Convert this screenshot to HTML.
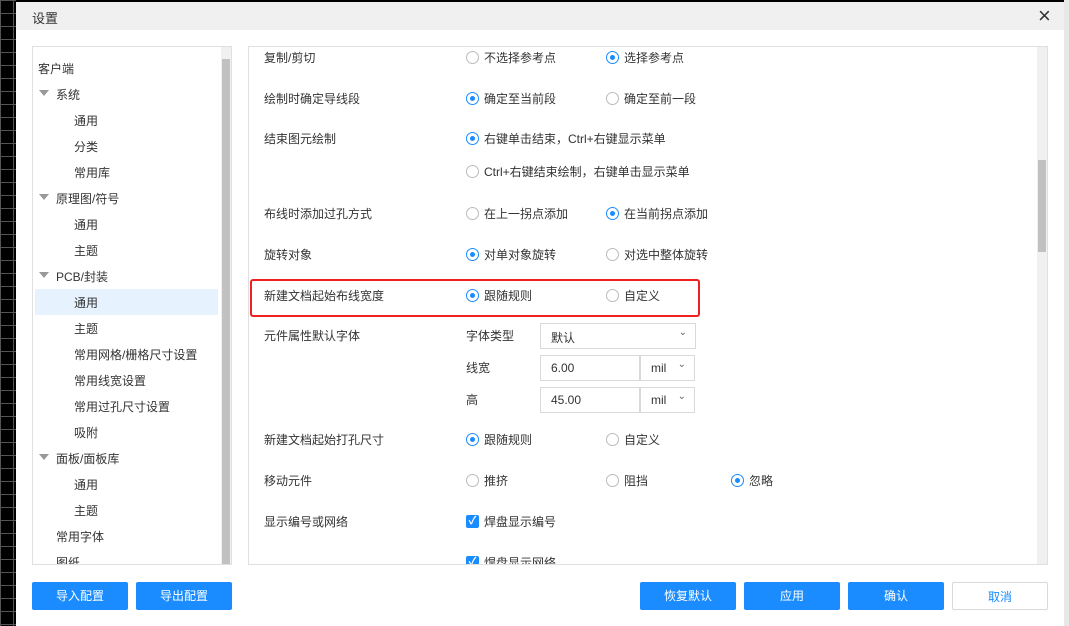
<!DOCTYPE html>
<html><head><meta charset="utf-8"><style>
*{box-sizing:border-box;margin:0;padding:0}
body{width:1069px;height:626px;overflow:hidden;background:#000;position:relative;font-family:"Liberation Sans","Noto Sans CJK SC",sans-serif;font-size:12px;color:#333}
.grid{position:absolute;left:0;top:0;width:16px;height:626px;background-image:linear-gradient(#555 1px,transparent 1px),linear-gradient(90deg,#555 1px,transparent 1px);background-size:13px 13px}
.rs{position:absolute;left:1064px;top:0;width:5px;height:626px;background:#e8e8e8}
.dlg{position:absolute;left:16px;top:2px;width:1048px;height:624px;background:#fff}
.tb{position:absolute;left:0;top:0;width:1048px;height:28px;background:#f0f0f0}
.tb span{position:absolute;left:16px;top:6px;font-size:13px}
.x{position:absolute;left:1022px;top:1px;font-size:22px;color:#333;font-weight:300}
.a{position:absolute;white-space:nowrap}
.lp{position:absolute;left:32px;top:46px;width:200px;height:519px;border:1px solid #e0e0e0;overflow:hidden}
.rp{position:absolute;left:248px;top:46px;width:800px;height:519px;border:1px solid #e0e0e0;overflow:hidden}
.sb{position:absolute;top:0;width:10px;height:100%;background:#f0f0f0}
.th{position:absolute;left:1px;width:8px;background:#c1c1c1}
.sel{position:absolute;left:2px;width:183px;height:26px;background:#e6f3ff}
.tri{position:absolute;width:0;height:0;border-left:5px solid transparent;border-right:5px solid transparent;border-top:6px solid #999}
.r{position:absolute;width:13px;height:13px;border:1px solid #bbb;border-radius:50%;background:#fff}
.r.on{border-color:#1a8cff}
.r.on:after{content:"";position:absolute;left:3px;top:3px;width:5px;height:5px;border-radius:50%;background:#1a8cff}
.cb{position:absolute;width:13px;height:13px;background:#1a8cff;border-radius:2px;color:#fff;font-size:11px;line-height:13px;text-align:center;font-weight:bold}
.in{position:absolute;height:26px;border:1px solid #d9d9d9;background:#fff;padding:5px 10px;font-size:12px}
.ch{position:absolute;right:8px;top:3px;font-size:10px;color:#666}
.btn{position:absolute;top:582px;width:96px;height:28px;background:#1a8cff;color:#fff;text-align:center;line-height:28px;font-size:12px;border-radius:2px}
.red{position:absolute;left:250px;top:280px;width:450px;height:38px;border:2px solid #f02020;border-radius:3px}
</style></head><body>
<div class="grid"></div><div class="rs"></div>
<div class="dlg">
<div class="tb"><span>设置</span><div class="x">×</div></div>
</div>
<div class="lp">
<div class="sel" style="top:242px"></div>
<div class="a" style="left:5px;top:13px">客户端</div>
<div class="tri" style="left:6px;top:43px"></div><div class="a" style="left:23px;top:39px">系统</div>
<div class="a" style="left:41px;top:65px">通用</div>
<div class="a" style="left:41px;top:91px">分类</div>
<div class="a" style="left:41px;top:117px">常用库</div>
<div class="tri" style="left:6px;top:147px"></div><div class="a" style="left:23px;top:143px">原理图/符号</div>
<div class="a" style="left:41px;top:169px">通用</div>
<div class="a" style="left:41px;top:195px">主题</div>
<div class="tri" style="left:6px;top:225px"></div><div class="a" style="left:23px;top:221px">PCB/封装</div>
<div class="a" style="left:41px;top:247px">通用</div>
<div class="a" style="left:41px;top:273px">主题</div>
<div class="a" style="left:41px;top:299px">常用网格/栅格尺寸设置</div>
<div class="a" style="left:41px;top:325px">常用线宽设置</div>
<div class="a" style="left:41px;top:351px">常用过孔尺寸设置</div>
<div class="a" style="left:41px;top:377px">吸附</div>
<div class="tri" style="left:6px;top:407px"></div><div class="a" style="left:23px;top:403px">面板/面板库</div>
<div class="a" style="left:41px;top:429px">通用</div>
<div class="a" style="left:41px;top:455px">主题</div>
<div class="a" style="left:23px;top:481px">常用字体</div>
<div class="a" style="left:23px;top:507px">图纸</div>
<div class="sb" style="left:188px"><div class="th" style="top:12px;height:510px"></div></div>
</div>
<div class="rp">
<div class="sb" style="left:788px"><div class="th" style="top:113px;height:92px"></div></div>
</div>
<div id="c" style="position:absolute;left:0;top:-1px;width:1069px;height:565px;overflow:hidden">
<div class="a" style="left:264px;top:50px">复制/剪切</div>
<div class="r" style="left:466px;top:52px"></div><div class="a" style="left:484px;top:50px">不选择参考点</div>
<div class="r on" style="left:606px;top:52px"></div><div class="a" style="left:624px;top:50px">选择参考点</div>
<div class="a" style="left:264px;top:91px">绘制时确定导线段</div>
<div class="r on" style="left:466px;top:93px"></div><div class="a" style="left:484px;top:91px">确定至当前段</div>
<div class="r" style="left:606px;top:93px"></div><div class="a" style="left:624px;top:91px">确定至前一段</div>
<div class="a" style="left:264px;top:131px">结束图元绘制</div>
<div class="r on" style="left:466px;top:133px"></div><div class="a" style="left:484px;top:131px">右键单击结束，Ctrl+右键显示菜单</div>
<div class="r" style="left:466px;top:166px"></div><div class="a" style="left:484px;top:164px">Ctrl+右键结束绘制，右键单击显示菜单</div>
<div class="a" style="left:264px;top:206px">布线时添加过孔方式</div>
<div class="r" style="left:466px;top:208px"></div><div class="a" style="left:484px;top:206px">在上一拐点添加</div>
<div class="r on" style="left:606px;top:208px"></div><div class="a" style="left:624px;top:206px">在当前拐点添加</div>
<div class="a" style="left:264px;top:247px">旋转对象</div>
<div class="r on" style="left:466px;top:249px"></div><div class="a" style="left:484px;top:247px">对单对象旋转</div>
<div class="r" style="left:606px;top:249px"></div><div class="a" style="left:624px;top:247px">对选中整体旋转</div>
<div class="red"></div>
<div class="a" style="left:264px;top:288px">新建文档起始布线宽度</div>
<div class="r on" style="left:466px;top:290px"></div><div class="a" style="left:484px;top:288px">跟随规则</div>
<div class="r" style="left:606px;top:290px"></div><div class="a" style="left:624px;top:288px">自定义</div>
<div class="a" style="left:264px;top:328px">元件属性默认字体</div>
<div class="a" style="left:466px;top:328px">字体类型</div>
<div class="in" style="left:540px;top:324px;width:156px">默认<span class="ch">⌄</span></div>
<div class="a" style="left:466px;top:360px">线宽</div>
<div class="in" style="left:540px;top:356px;width:100px">6.00</div>
<div class="in" style="left:640px;top:356px;width:55px">mil<span class="ch">⌄</span></div>
<div class="a" style="left:466px;top:392px">高</div>
<div class="in" style="left:540px;top:388px;width:100px">45.00</div>
<div class="in" style="left:640px;top:388px;width:55px">mil<span class="ch">⌄</span></div>
<div class="a" style="left:264px;top:432px">新建文档起始打孔尺寸</div>
<div class="r on" style="left:466px;top:434px"></div><div class="a" style="left:484px;top:432px">跟随规则</div>
<div class="r" style="left:606px;top:434px"></div><div class="a" style="left:624px;top:432px">自定义</div>
<div class="a" style="left:264px;top:473px">移动元件</div>
<div class="r" style="left:466px;top:475px"></div><div class="a" style="left:484px;top:473px">推挤</div>
<div class="r" style="left:606px;top:475px"></div><div class="a" style="left:624px;top:473px">阻挡</div>
<div class="r on" style="left:731px;top:475px"></div><div class="a" style="left:749px;top:473px">忽略</div>
<div class="a" style="left:264px;top:514px">显示编号或网络</div>
<div class="cb" style="left:466px;top:516px">✓</div><div class="a" style="left:484px;top:514px">焊盘显示编号</div>
<div class="cb" style="left:466px;top:557px">✓</div><div class="a" style="left:484px;top:555px">焊盘显示网络</div>
</div>
<div class="btn" style="left:32px">导入配置</div>
<div class="btn" style="left:136px">导出配置</div>
<div class="btn" style="left:640px">恢复默认</div>
<div class="btn" style="left:744px">应用</div>
<div class="btn" style="left:848px">确认</div>
<div class="btn" style="left:952px;background:#fff;border:1px solid #d9d9d9;color:#1a8cff">取消</div>
</body></html>
